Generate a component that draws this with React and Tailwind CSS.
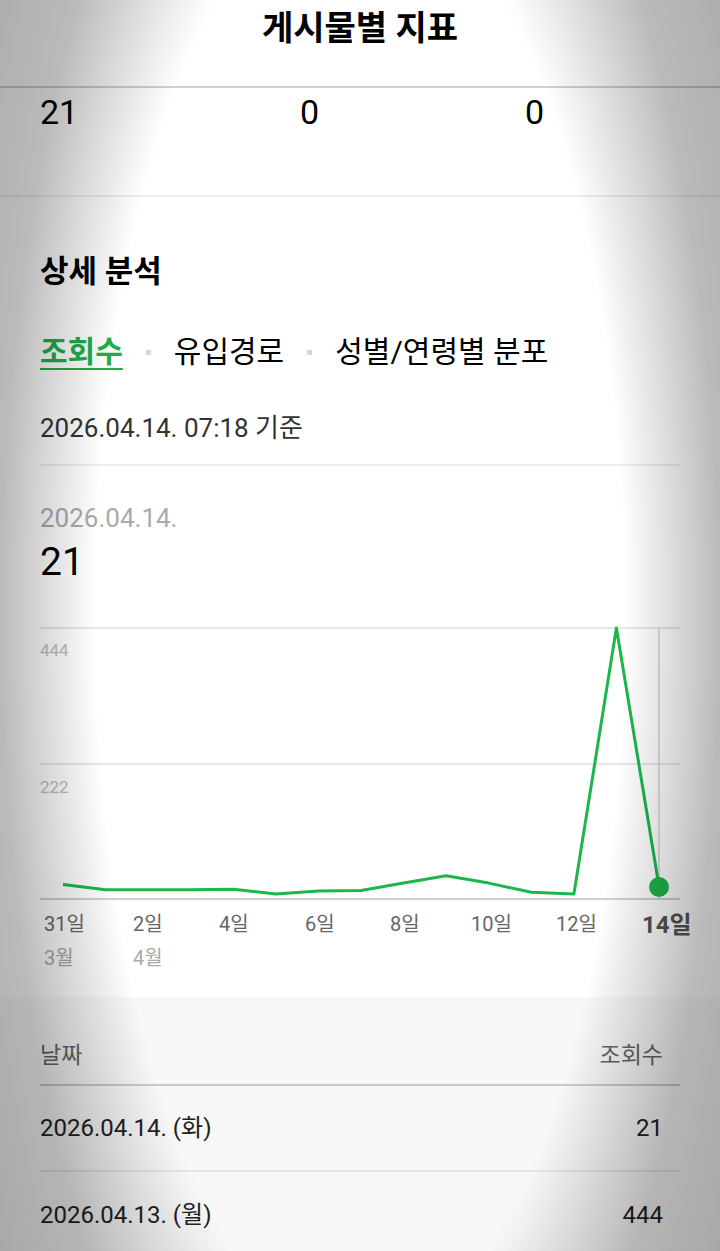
import React from 'react';

const FONT = { fontFamily: "Roboto, 'Noto Sans CJK KR', sans-serif" };

// daily views, Mar 31 → Apr 14
const VIEWS = [24, 15, 15, 15, 16, 8, 13, 14, 26, 38, 26, 11, 8, 444, 21];

const X_LABELS = [
  { x: 44, t: '31일' },
  { x: 133, t: '2일' },
  { x: 219, t: '4일' },
  { x: 305, t: '6일' },
  { x: 390, t: '8일' },
  { x: 471, t: '10일' },
  { x: 556, t: '12일' },
];

const ROWS = [
  { date: '2026.04.14. (화)', views: '21' },
  { date: '2026.04.13. (월)', views: '444' },
];

const Chart = () => {
  // chart coords: baseline y=299, top y=28, x 63 → 659
  const step = (659 - 63) / 14;
  const pts = VIEWS.map((v, i) => `${(63 + i * step).toFixed(1)},${(299 - (v / 444) * 271).toFixed(1)}`).join(' ');
  return (
    <svg width="720" height="397" viewBox="0 0 720 397" className="block -mx-[40px]" style={FONT}>
      <line x1="40" y1="28" x2="680" y2="28" stroke="#e6e6e6" strokeWidth="2" />
      <line x1="40" y1="164" x2="680" y2="164" stroke="#e6e6e6" strokeWidth="2" />
      <text x="40" y="56" fontSize="17" fill="#bdbdbd">444</text>
      <text x="40" y="193" fontSize="17" fill="#bdbdbd">222</text>
      <line x1="659" y1="28" x2="659" y2="299" stroke="#d2d2d2" strokeWidth="1.5" />
      <line x1="40" y1="299" x2="680" y2="299" stroke="#cfcfcf" strokeWidth="2" />
      <polyline points={pts} fill="none" stroke="#1cb64b" strokeWidth="3" strokeLinejoin="round" />
      <circle cx="659" cy="287" r="10" fill="#1cb64b" />
      {X_LABELS.map((l) => (
        <text key={l.t} x={l.x} y="331" fontSize="20" fill="#666">{l.t}</text>
      ))}
      <text x="642" y="333" fontSize="24" fontWeight="700" fill="#555">14일</text>
      <text x="44" y="365" fontSize="20" fill="#aaa">3월</text>
      <text x="133" y="365" fontSize="20" fill="#aaa">4월</text>
    </svg>
  );
};

export default function App() {
  return (
    <div className="relative w-[720px] h-[1251px] overflow-hidden bg-white text-black" style={FONT}>
      <header className="h-[88px] border-b-2 border-[#d0d0d0] pt-[6px] text-center">
        <h1 className="text-[34px] leading-[44px] font-bold">게시물별 지표</h1>
      </header>

      <div className="h-[109px] border-b-2 border-[#eeeeee] px-[40px] pt-[4px] flex text-[34px] leading-[40px]">
        <span className="w-[260px]">21</span>
        <span className="w-[225px]">0</span>
        <span>0</span>
      </div>

      <section className="px-[40px]">
        <h2 className="pt-[55px] text-[31px] leading-[40px] font-bold">상세 분석</h2>

        <nav className="mt-[40px] flex items-center gap-[23px] text-[30px] leading-[40px]">
          <span className="font-bold text-[#1fae4b] underline decoration-2 underline-offset-[6px]">조회수</span>
          <span className="w-[5px] h-[5px] bg-[#d6d6d6]" />
          <span>유입경로</span>
          <span className="w-[5px] h-[5px] bg-[#d6d6d6]" />
          <span>성별/연령별 분포</span>
        </nav>

        <p className="mt-[40px] text-[26px] leading-[32px] text-[#333]">2026.04.14. 07:18 기준</p>
        <div className="mt-[20px] h-[2px] bg-[#eeeeee]" />

        <p className="mt-[37px] text-[26px] leading-[30px] text-[#aaaaaa]">2026.04.14.</p>
        <p className="mt-[7px] text-[39px] leading-[44px]">21</p>

        <div className="mt-[16px]">
          <Chart />
        </div>
      </section>

      <section className="bg-[#f8f8f8] px-[40px] h-[260px]">
        <div className="flex justify-between pt-[44px] pb-[13px] pr-[17px] text-[23px] leading-[30px] text-[#666] border-b-2 border-[#c8c8c8]">
          <span>날짜</span>
          <span>조회수</span>
        </div>
        {ROWS.map((r, i) => (
          <div
            key={r.date}
            className={`h-[86px] flex items-center justify-between pr-[17px] text-[24px] text-[#222] ${i === 0 ? 'border-b-2 border-[#e6e6e6]' : ''}`}
          >
            <span>{r.date}</span>
            <span>{r.views}</span>
          </div>
        ))}
      </section>

      {/* camera vignette over the whole shot */}
      <div className="pointer-events-none absolute inset-0 bg-[radial-gradient(ellipse_400px_1100px_at_50%_49%,transparent_66%,rgba(0,0,0,0.27)_90%,rgba(0,0,0,0.33)_110%)]" />
    </div>
  );
}
